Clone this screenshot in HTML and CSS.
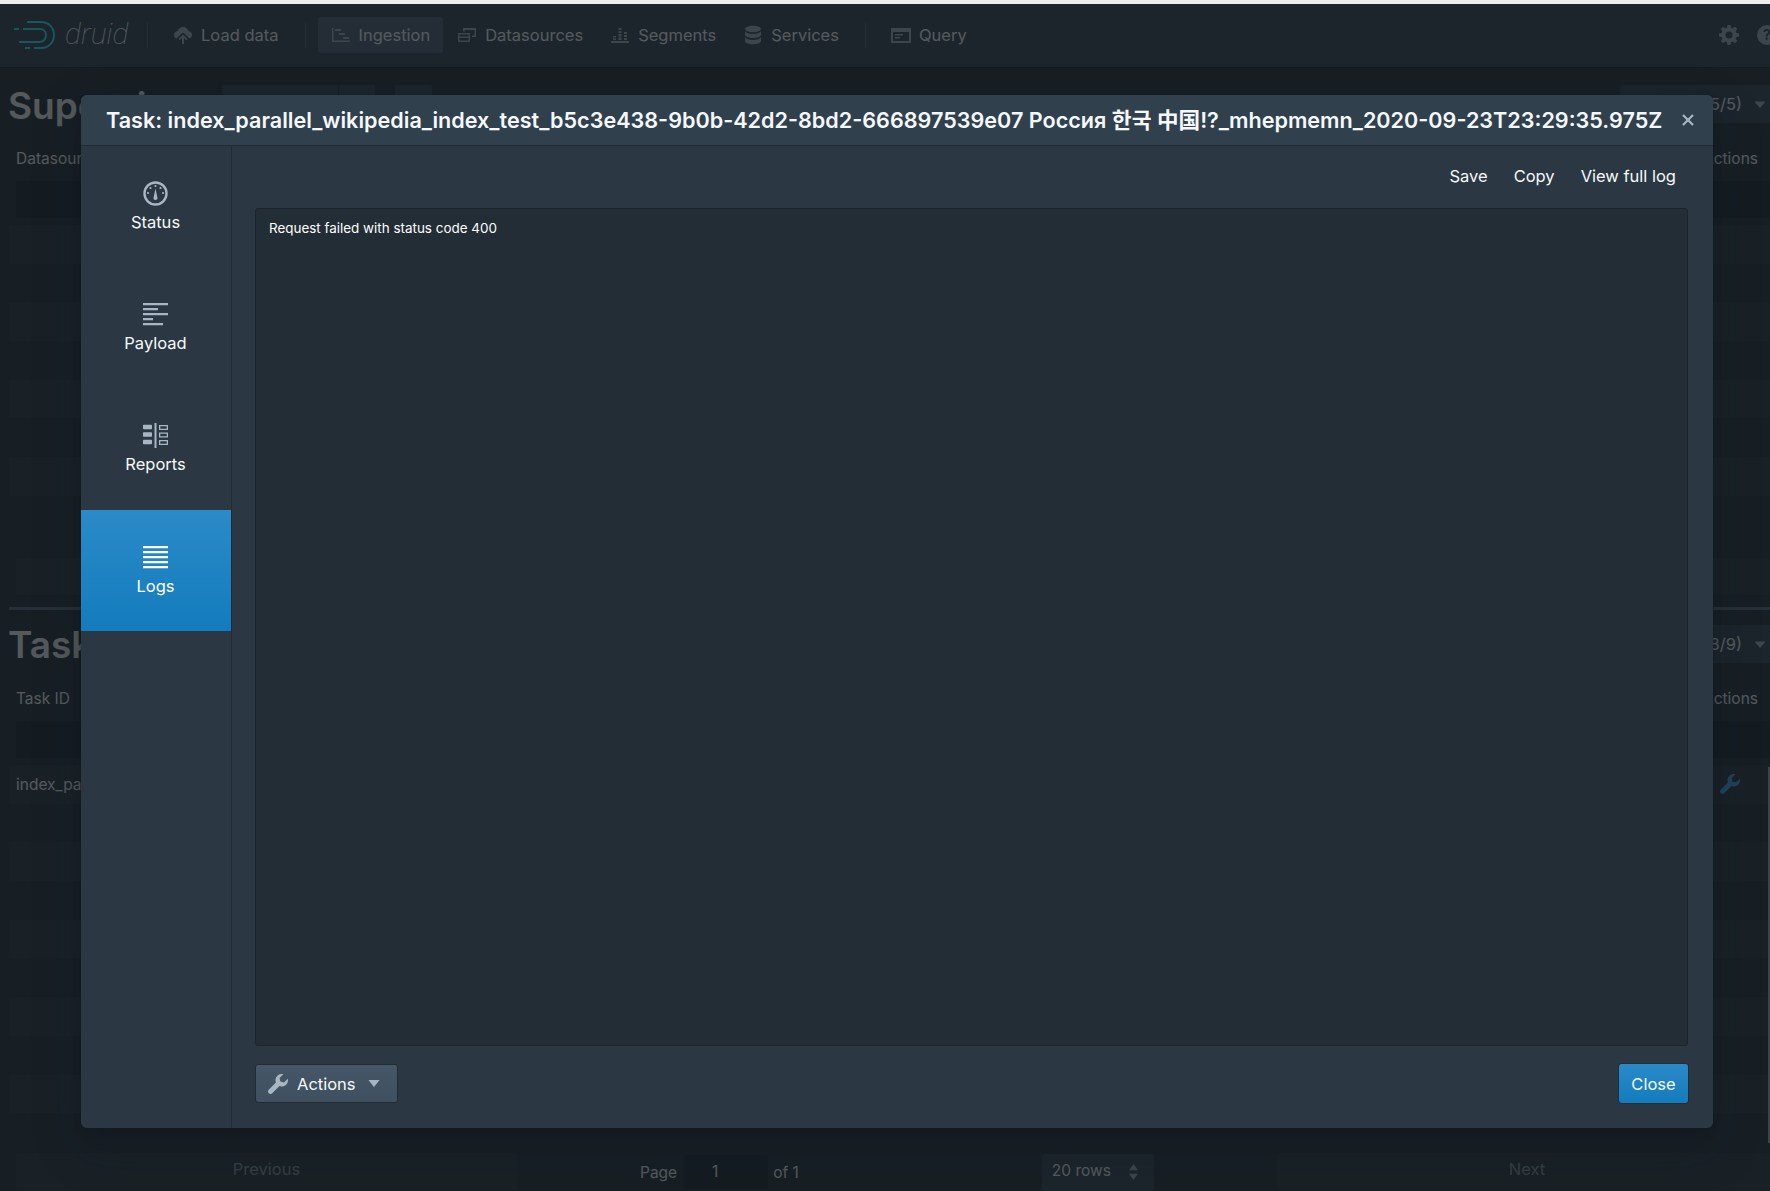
FILE: index.html
```html
<!DOCTYPE html>
<html lang="en">
<head>
<meta charset="utf-8">
<title>Druid Ingestion</title>
<link rel="stylesheet" href="styles.css">
</head>
<body>
<div class="app">
  <nav class="navbar">
    <svg class="logo" viewBox="0 0 42 30" fill="none" stroke="#2ceefb" stroke-width="2">
      <path d="M13 2h14c8 0 13 6 13 13s-5 13-13 13H20"/>
      <path d="M0 9h5M9 9h17c4 0 6 3 6 6s-2 7-6 7H5"/>
      <path d="M11 28h5"/>
    </svg>
    <span class="brand">druid</span>
    <span class="nav-divider first"></span>
    <a class="nav-btn">
      <svg class="nav-icon" viewBox="0 0 20 20"><path d="M10 2c-2.6 0-4.7 1.7-5.4 4.1C2.600 6.400 1 8 1 10c0 1.600 1 3 2.500 3.600L9 8.300c.6-.5 1.400-.5 2 0l5.500 5.300C18 13 19 11.600 19 10c0-2-1.600-3.600-3.600-3.900C14.700 3.700 12.600 2 10 2z"/><path d="M10 9.500l-4.500 4.400 1.300 1.300L9 13.100V19h2v-5.900l2.200 2.100 1.300-1.300z"/></svg>
      Load data
    </a>
    <span class="nav-divider"></span>
    <a class="nav-btn active">
      <svg class="nav-icon" viewBox="0 0 20 20"><path d="M1 3h1.500v12.500H19V17H1z"/><path d="M4 4h6v2H4zM8 8h6v2H8zM12 12h6v2h-6z"/></svg>
      Ingestion
    </a>
    <a class="nav-btn">
      <svg class="nav-icon" viewBox="0 0 20 20"><path d="M1 8h12v9H1zm1.500 1.500v2h9v-2zm0 3.500v2.500h9V13z" fill-rule="evenodd"/><path d="M6 3h13v9h-4v-1.500h2.500V5h-10v1.500H6z"/></svg>
      Datasources
    </a>
    <a class="nav-btn">
      <svg class="nav-icon" viewBox="0 0 20 20"><path d="M1 16h18v2H1zM3 11h3v1.500H3zM3 13.500h3V15H3zM8.500 3h3v2h-3zM8.500 6h3v2h-3zM8.500 9h3v2.500h-3zM8.500 12.500h3V15h-3zM14 7h3v2h-3zM14 10h3v2h-3zM14 13h3v2h-3z"/></svg>
      Segments
    </a>
    <a class="nav-btn">
      <svg class="nav-icon" viewBox="0 0 20 20"><ellipse cx="10" cy="4" rx="8" ry="3.300"/><path d="M2 6c1 2 4 3 8 3s7-1 8-3v4c-1 2-4 3-8 3s-7-1-8-3zM2 12c1 2 4 3 8 3s7-1 8-3v4c0 2-4 3.300-8 3.300S2 18 2 16z"/></svg>
      Services
    </a>
    <span class="nav-divider"></span>
    <a class="nav-btn">
      <svg class="nav-icon" viewBox="0 0 20 20"><path fill-rule="evenodd" d="M0 3h20v15H0zm2 4v9h16V7zM4 9h8v1.500H4zM4 12h5v1.500H4z"/></svg>
      Query
    </a>
    <span class="nav-spacer"></span>
    <svg class="tool-icon" viewBox="0 0 20 20"><path fill-rule="evenodd" d="M8.500 0h3l.5 2.700 1.700.7L16 1.800 18.200 4l-1.600 2.300.7 1.700 2.700.5v3l-2.700.5-.7 1.700 1.600 2.300-2.200 2.200-2.300-1.600-1.700.7-.5 2.700h-3L8 17.300l-1.700-.7L4 18.200 1.800 16l1.600-2.300-.7-1.700L0 11.500v-3L2.700 8l.7-1.700L1.800 4 4 1.800l2.300 1.600L8 2.700zM10 6.500a3.500 3.500 0 100 7 3.500 3.500 0 000-7z"/></svg>
    <span class="help-icon">?</span>
  </nav>

  <section class="panel supervisors">
    <header class="bar">
      <h1>Supervisors</h1>
      <span class="group-btn">Status</span><span class="group-btn narrow"></span>
      <span class="group-btn narrow single"></span>
      <span class="columns">Columns (5/5)<svg class="caret" viewBox="0 0 16 16"><path d="M12 6.500c0-.28-.22-.5-.5-.5h-7a.495.495 0 00-.37.83l3.500 4c.09.1.22.17.37.17s.28-.07.37-.17l3.500-4c.08-.09.13-.2.13-.33z"/></svg></span>
    </header>
    <div class="thead"><span>Datasource</span><span>Actions</span></div>
    <div class="filter"></div>
    <div class="rows">
      <div class="row"></div><div class="row"></div><div class="row"></div><div class="row"></div>
      <div class="row"></div><div class="row"></div><div class="row"></div><div class="row"></div>
    </div>
    <div class="stub-pagination"></div>
  </section>

  <div class="separator"></div>

  <section class="panel tasks">
    <header class="bar tasks-bar">
      <h1>Tasks</h1>
      <span class="columns">Columns (8/9)<svg class="caret" viewBox="0 0 16 16"><path d="M12 6.500c0-.28-.22-.5-.5-.5h-7a.495.495 0 00-.37.83l3.500 4c.09.1.22.17.37.17s.28-.07.37-.17l3.500-4c.08-.09.13-.2.13-.33z"/></svg></span>
    </header>
    <div class="thead"><span>Task ID</span><span>Actions</span></div>
    <div class="filter"></div>
    <div class="rows fill">
      <div class="row cells"><span>index_parallel_wikipedia</span>
        <svg class="row-wrench" viewBox="0 0 16 16"><path d="M15.830 3.700l-3.060 3.050-2.840-.7-.7-2.830L12.290.170a5.004 5.004 0 00-4.830 1.290 4.967 4.967 0 00-1.120 5.360L.580 12.580c-.36.360-.58.860-.58 1.410 0 1.100.9 2 2 2 .55 0 1.050-.22 1.410-.59l5.770-5.770c1.790.69 3.910.33 5.350-1.120 1.320-1.300 1.740-3.150 1.300-4.810z"/></svg>
      </div>
      <div class="row"></div><div class="row"></div><div class="row"></div><div class="row"></div>
      <div class="row"></div><div class="row"></div><div class="row"></div><div class="row"></div><div class="row"></div>
    </div>
    <span class="scroll-edge"></span>
    <footer class="pagination">
      <span class="page-btn prev">Previous</span>
      <div class="page-center">
        <span>Page</span>
        <span class="page-input">1</span>
        <span>of 1</span>
        <span class="rows-select">20 rows
          <svg class="updown" viewBox="0 0 12 18"><path d="M6 0l5 7H1zM6 18l-5-7h10z"/></svg>
        </span>
      </div>
      <span class="page-btn next">Next</span>
    </footer>
  </section>

  <div class="overlay"></div>

  <div class="dialog">
    <header class="dialog-header">
      <h2>Task: index_parallel_wikipedia_index_test_b5c3e438-9b0b-42d2-8bd2-666897539e07 Россия 한국 中国!?_mhepmemn_2020-09-23T23:29:35.975Z</h2>
      <svg class="dialog-x" viewBox="0 0 14 14"><path d="M2 2l10 10M12 2L2 12"/></svg>
    </header>
    <div class="dialog-body">
      <aside class="tabs">
        <div class="tab">
          <svg class="tab-icon" viewBox="0 0 25 25"><circle class="ring" cx="12.500" cy="12.500" r="11"/><path d="M12.500 7.500l1.900 9a1.950 1.950 0 11-3.800 0z"/><circle cx="12.500" cy="5" r="1.100"/><circle cx="7.500" cy="7" r="1.100"/><circle cx="17.500" cy="7" r="1.100"/><circle cx="5" cy="12" r="1.100"/><circle cx="20" cy="12" r="1.100"/></svg>
          <span>Status</span>
        </div>
        <div class="tab">
          <svg class="tab-icon" viewBox="0 0 25 25"><path d="M0 1h25v2.200H0zM0 6h15v2.200H0zM0 11h25v2.200H0zM0 16h10v2.200H0zM0 21h20v2.200H0z"/></svg>
          <span>Payload</span>
        </div>
        <div class="tab">
          <svg class="tab-icon" viewBox="0 0 25 25"><path d="M0 2.500a.8.8 0 01.8-.8h7.400a.8.8 0 01.8.8v3a.8.8 0 01-.8.8H.8a.8.8 0 01-.8-.8zM0 10a.8.8 0 01.8-.8h7.400a.8.8 0 01.8.8v3a.8.8 0 01-.8.8H.8a.8.8 0 01-.8-.8zM0 17.500a.8.8 0 01.8-.8h7.400a.8.8 0 01.8.8v3a.8.8 0 01-.8.8H.8a.8.8 0 01-.8-.8zM11.500 0h2v25h-2z"/><path fill-rule="evenodd" d="M16 2h9v5h-9zm1.300 1.300v2.400h6.400V3.300zM16 9.500h9v5h-9zm1.300 1.300v2.400h6.400v-2.400zM16 17h9v5h-9zm1.300 1.300v2.400h6.400v-2.400z"/></svg>
          <span>Reports</span>
        </div>
        <div class="tab selected">
          <svg class="tab-icon" viewBox="0 0 25 25"><path d="M0 1h25v2.200H0zM0 6h25v2.200H0zM0 11h25v2.200H0zM0 16h25v2.200H0zM0 21h25v2.200H0z"/></svg>
          <span>Logs</span>
        </div>
      </aside>
      <main class="log-pane">
        <div class="log-tools">
          <a>Save</a><a>Copy</a><a>View full log</a>
        </div>
        <div class="log-box">Request failed with status code 400</div>
        <footer class="dialog-footer">
          <button class="btn-actions">
            <svg class="btn-wrench" viewBox="0 0 16 16"><path d="M15.830 3.700l-3.060 3.050-2.840-.7-.7-2.830L12.290.170a5.004 5.004 0 00-4.830 1.290 4.967 4.967 0 00-1.120 5.360L.580 12.580c-.36.360-.58.860-.58 1.410 0 1.100.9 2 2 2 .55 0 1.050-.22 1.410-.59l5.770-5.770c1.790.69 3.910.33 5.350-1.120 1.320-1.300 1.740-3.150 1.300-4.810z"/></svg>
            <span>Actions</span>
            <svg class="btn-caret" viewBox="0 0 14 8"><path d="M13.500 0h-13L7 8z"/></svg>
          </button>
          <button class="btn-close">Close</button>
        </footer>
      </main>
    </div>
  </div>
</div>
</body>
</html>
```
FILE: styles.css
```css
html, body {
  margin: 0;
  height: 100%;
  overflow: hidden;
  background: #eceef0;
}
body {
  padding-top: 4px;
  box-sizing: border-box;
  font-family: Inter, "Noto Sans CJK KR", "Noto Sans CJK SC", sans-serif;
  font-size: 16.5px;
  color: #f5f8fa;
}
.app {
  position: relative;
  width: 1777px;
  height: 1187px;
  display: flex;
  flex-direction: column;
  background: #293742;
  overflow: hidden;
}

/* navbar */
.navbar {
  flex: none;
  height: 63px;
  box-sizing: border-box;
  padding-bottom: 2px;
  display: flex;
  align-items: center;
  padding-left: 14px;
  background: #394b59;
  box-shadow: 0 1px 0 rgba(16, 22, 26, .4);
}
.logo { width: 42px; height: 30px; flex: none; }
.brand {
  flex: none;
  width: 64px;
  margin: 0 0 2px 9px;
  font-family: Roboto, sans-serif;
  font-style: italic;
  font-weight: 100;
  font-size: 30px;
  line-height: 36px;
}
.nav-divider {
  width: 1px;
  height: 26px;
  margin: 0 12px;
  background: rgba(255, 255, 255, .15);
}
.nav-divider.first { margin: 0 12px 0 18px; }
.nav-btn {
  display: flex;
  align-items: center;
  gap: 8px;
  height: 36px;
  padding: 0 13px;
  margin-right: 1px;
  border-radius: 3px;
}
.nav-btn.active { background: rgba(138, 155, 168, .35); }
.nav-icon { width: 20px; height: 20px; fill: #a7b6c2; flex: none; }
.nav-spacer { flex: 1; }
.tool-icon { width: 20px; height: 20px; fill: #a7b6c2; margin-right: 18px; }
.help-icon {
  width: 20px;
  height: 20px;
  border-radius: 50%;
  background: #a7b6c2;
  color: #394b59;
  font-size: 15px;
  font-weight: 700;
  line-height: 20px;
  text-align: center;
}

/* background panels */
.panel { padding-left: 9px; display: flex; flex-direction: column; position: relative; }
.supervisors { flex: none; height: 540px; }
.tasks { flex: 1; min-height: 0; }
.bar {
  flex: none;
  display: flex;
  align-items: center;
  height: 38px;
  margin-top: 18px;
}
.tasks-bar { margin-top: 15px; }
.bar h1 {
  margin: 2px auto 0 -1px;
  font-size: 37px;
  font-weight: 600;
  line-height: 38px;
}
.supervisors h1 { margin: 4px 0 0 -1px; width: 214px; }
.group-btn {
  width: 117px;
  height: 38px;
  line-height: 38px;
  box-sizing: border-box;
  padding-left: 18px;
  background: #394b59;
  border-right: 1px solid #293742;
}
.group-btn.narrow { width: 37px; padding: 0; }
.group-btn.single { margin: 0 auto 0 19px; width: 38px; border-radius: 3px; }
.columns {
  display: flex;
  align-items: center;
  justify-content: flex-end;
  width: 157px;
  height: 38px;
  box-sizing: border-box;
  padding-right: 7px;
  background: #394b59;
  border-radius: 3px;
}
.caret { width: 20px; height: 20px; margin-left: 8px; fill: #a7b6c2; }
.thead {
  flex: none;
  display: flex;
  justify-content: space-between;
  padding: 0 19px 0 7px;
  margin-top: 22px;
  height: 28px;
  line-height: 28px;
  font-size: 15.500px;
}
.filter {
  flex: none;
  height: 37px;
  margin: 8px 0 7px 7px;
  border-radius: 3px;
  background: rgba(16, 22, 26, .3);
}
.rows { flex: none; overflow: hidden; }
.rows.fill { flex: 1; min-height: 0; }
.row { height: 38.7px; }
.row:nth-child(odd) { background: rgba(255, 255, 255, .035); }
.cells {
  display: flex;
  align-items: center;
  justify-content: space-between;
  padding: 0 37px 0 7px;
  font-size: 15.500px;
}
.row-wrench { width: 20px; height: 20px; fill: #48aff0; }
.stub-pagination {
  height: 37px;
  margin: 23px 0 0 7px;
  background: rgba(255, 255, 255, .03);
}
.separator {
  flex: none;
  height: 3px;
  margin-left: 9px;
  background: #5c7080;
}
.scroll-edge {
  position: absolute;
  left: 1768px;
  top: 157px;
  width: 2px;
  height: 376px;
  background: #a7b6c2;
}
.pagination {
  flex: none;
  display: flex;
  height: 38px;
  margin: 7px 0 0 7px;
}
.page-btn {
  flex: none;
  width: 501px;
  height: 37px;
  line-height: 33px;
  text-align: center;
  background: rgba(255, 255, 255, .035);
  color: rgba(245, 248, 250, .5);
  border-radius: 3px;
}
.page-btn.next { width: 500px; }
.page-center {
  flex: none;
  width: 760px;
  box-sizing: border-box;
  padding-left: 123px;
  display: flex;
  align-items: center;
  font-size: 15.500px;
}
.page-input {
  width: 84px;
  height: 34px;
  box-sizing: border-box;
  padding-right: 22px;
  margin: 0 5px 0 7px;
  line-height: 34px;
  text-align: center;
  background: rgba(16, 22, 26, .3);
  border-radius: 3px;
}
.rows-select {
  display: flex;
  align-items: center;
  justify-content: space-between;
  width: 112px;
  height: 37px;
  box-sizing: border-box;
  padding: 0 15px 3px 10px;
  margin-left: 243px;
  background: #394b59;
  border-radius: 3px;
}
.updown { width: 11px; height: 16px; margin-top: 3px; fill: #a7b6c2; }

/* overlay and dialog */
.overlay {
  position: absolute;
  inset: 0;
  background: rgba(16, 22, 26, .7);
}
.dialog {
  position: absolute;
  left: 81px;
  top: 91px;
  width: 1632px;
  height: 1033px;
  display: flex;
  flex-direction: column;
  border-radius: 6px;
  overflow: hidden;
  background: #2b3844;
  box-shadow: 0 0 0 1px rgba(16, 22, 26, .1), 0 4px 8px rgba(16, 22, 26, .2), 0 18px 46px 6px rgba(16, 22, 26, .2);
}
.dialog-header {
  flex: none;
  height: 50px;
  display: flex;
  align-items: center;
  padding-left: 25px;
  background: #30404d;
  border-bottom: 1px solid #202b33;
}
.dialog-header h2 {
  margin: 0;
  font-size: 21.600px;
  line-height: 26px;
  font-weight: 600;
  white-space: nowrap;
  flex: none;
  width: 1557px;
}
.dialog-x {
  width: 14px;
  height: 14px;
  margin-left: 18px;
  fill: none;
  stroke: #a7b6c2;
  stroke-width: 2.200;
}
.dialog-body { flex: 1; min-height: 0; display: flex; }
.tabs {
  flex: none;
  width: 150px;
  padding-top: 1px;
  border-right: 1px solid #202b33;
}
.tab {
  height: 121px;
  box-sizing: border-box;
  padding: 0 1px 3px 0;
  display: flex;
  flex-direction: column;
  align-items: center;
  justify-content: center;
  gap: 6px;
  line-height: 20px;
}
.tab.selected {
  color: #fff;
  padding-bottom: 1px;
  background: linear-gradient(#2b8ac8, #137cbd);
}
.tab-icon { width: 25px; height: 25px; fill: #a7b6c2; }
.tab.selected .tab-icon { fill: #fff; }
.ring { fill: none; stroke: #a7b6c2; stroke-width: 2.400; }
.log-pane {
  flex: 1;
  min-width: 0;
  display: flex;
  flex-direction: column;
  padding: 0 25px 25px 23px;
}
.log-tools {
  flex: none;
  height: 62px;
  box-sizing: border-box;
  padding: 0 12px 2px 0;
  display: flex;
  align-items: center;
  justify-content: flex-end;
  gap: 26px;
}
.log-box {
  flex: 1;
  min-height: 0;
  box-sizing: border-box;
  padding: 9px 13px;
  font-size: 13.430px;
  line-height: 20px;
  color: #fff;
  background: #232d36;
  border: 1px solid #1c252c;
  border-radius: 3px;
}
.dialog-footer {
  flex: none;
  display: flex;
  justify-content: space-between;
  margin-top: 18px;
}
.dialog-footer button {
  height: 39px;
  font: inherit;
  color: #f5f8fa;
  border-radius: 3px;
  box-sizing: border-box;
}
.btn-actions {
  width: 143px;
  display: flex;
  align-items: center;
  padding: 0 0 0 12px;
  background: linear-gradient(#455767, #3f5060);
  border: 1px solid #202b33;
}
.btn-wrench { width: 20px; height: 20px; fill: #a7b6c2; flex: none; }
.btn-actions span { margin-left: 9px; }
.btn-caret { width: 12px; height: 7px; margin-left: 12px; fill: #a7b6c2; }
.btn-close {
  width: 69px;
  padding: 0;
  background: linear-gradient(#2b8ac8, #137cbd);
  border: 0;
  box-shadow: 0 0 0 1px rgba(16, 22, 26, .3);
  color: #fff;
}
```
